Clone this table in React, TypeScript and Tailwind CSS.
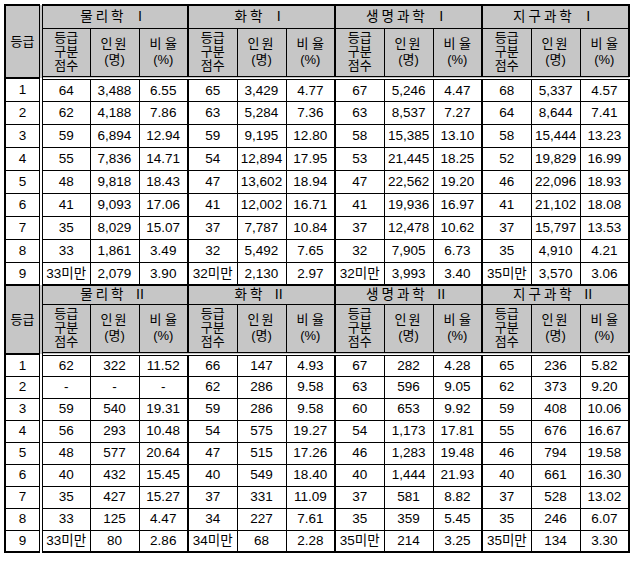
import React from "react";

type Row = [string, string, string];
type Section = { names: string[]; data: Row[][] };

const s1: Section = {
  names: ["물리학 Ⅰ", "화학 Ⅰ", "생명과학 Ⅰ", "지구과학 Ⅰ"],
  data: [
    [
      ["64", "3,488", "6.55"],
      ["62", "4,188", "7.86"],
      ["59", "6,894", "12.94"],
      ["55", "7,836", "14.71"],
      ["48", "9,818", "18.43"],
      ["41", "9,093", "17.06"],
      ["35", "8,029", "15.07"],
      ["33", "1,861", "3.49"],
      ["33미만", "2,079", "3.90"],
    ],
    [
      ["65", "3,429", "4.77"],
      ["63", "5,284", "7.36"],
      ["59", "9,195", "12.80"],
      ["54", "12,894", "17.95"],
      ["47", "13,602", "18.94"],
      ["41", "12,002", "16.71"],
      ["37", "7,787", "10.84"],
      ["32", "5,492", "7.65"],
      ["32미만", "2,130", "2.97"],
    ],
    [
      ["67", "5,246", "4.47"],
      ["63", "8,537", "7.27"],
      ["58", "15,385", "13.10"],
      ["53", "21,445", "18.25"],
      ["47", "22,562", "19.20"],
      ["41", "19,936", "16.97"],
      ["37", "12,478", "10.62"],
      ["32", "7,905", "6.73"],
      ["32미만", "3,993", "3.40"],
    ],
    [
      ["68", "5,337", "4.57"],
      ["64", "8,644", "7.41"],
      ["58", "15,444", "13.23"],
      ["52", "19,829", "16.99"],
      ["46", "22,096", "18.93"],
      ["41", "21,102", "18.08"],
      ["37", "15,797", "13.53"],
      ["35", "4,910", "4.21"],
      ["35미만", "3,570", "3.06"],
    ],
  ],
};

const s2: Section = {
  names: ["물리학 Ⅱ", "화학 Ⅱ", "생명과학 Ⅱ", "지구과학 Ⅱ"],
  data: [
    [
      ["62", "322", "11.52"],
      ["-", "-", "-"],
      ["59", "540", "19.31"],
      ["56", "293", "10.48"],
      ["48", "577", "20.64"],
      ["40", "432", "15.45"],
      ["35", "427", "15.27"],
      ["33", "125", "4.47"],
      ["33미만", "80", "2.86"],
    ],
    [
      ["66", "147", "4.93"],
      ["62", "286", "9.58"],
      ["59", "286", "9.58"],
      ["54", "575", "19.27"],
      ["47", "515", "17.26"],
      ["40", "549", "18.40"],
      ["37", "331", "11.09"],
      ["34", "227", "7.61"],
      ["34미만", "68", "2.28"],
    ],
    [
      ["67", "282", "4.28"],
      ["63", "596", "9.05"],
      ["60", "653", "9.92"],
      ["54", "1,173", "17.81"],
      ["46", "1,283", "19.48"],
      ["40", "1,444", "21.93"],
      ["37", "581", "8.82"],
      ["35", "359", "5.45"],
      ["35미만", "214", "3.25"],
    ],
    [
      ["65", "236", "5.82"],
      ["62", "373", "9.20"],
      ["59", "408", "10.06"],
      ["55", "676", "16.67"],
      ["46", "794", "19.58"],
      ["40", "661", "16.30"],
      ["37", "528", "13.02"],
      ["35", "246", "6.07"],
      ["35미만", "134", "3.30"],
    ],
  ],
};

const cell = "border border-black text-center p-0 align-middle";
const head = "bg-[#c6c6c6]";

function SectionRows({ sec, first }: { sec: Section; first: boolean }) {
  const topB = first ? "" : "border-t-2";
  const groupH = first ? "h-[23px]" : "h-[19px]";
  const rowH = first ? "h-[23px]" : "h-[22px]";
  return (
    <>
      <tr className={groupH}>
        <td
          rowSpan={2}
          className={`${cell} ${head} ${topB} border-r-4 border-double border-b-2 text-[13px]`}
        >
          등급
        </td>
        {sec.names.map((n, i) => (
          <td
            key={n}
            colSpan={3}
            className={`${cell} ${head} ${topB} ${i > 0 ? "border-l-2" : ""} tracking-[3px]`}
          >
            {n}
          </td>
        ))}
      </tr>
      <tr className="h-[50px]">
        {sec.names.map((n, i) => (
          <React.Fragment key={n}>
            <td
              className={`${cell} ${head} border-b-4 border-double ${i > 0 ? "border-l-2" : ""} text-[13px] leading-[14px]`}
            >
              등급
              <br />
              구분
              <br />
              점수
            </td>
            <td className={`${cell} ${head} border-b-4 border-double text-[13px] leading-[16px]`}>
              <span className="tracking-[2px]">인원</span>
              <br />
              (명)
            </td>
            <td className={`${cell} ${head} border-b-4 border-double text-[13px] leading-[16px]`}>
              비 율
              <br />
              (%)
            </td>
          </React.Fragment>
        ))}
      </tr>
      {Array.from({ length: 9 }).map((_, r) => (
        <tr key={r} className={rowH}>
          <td className={`${cell} border-r-4 border-double`}>{r + 1}</td>
          {sec.data.map((g, i) => (
            <React.Fragment key={i}>
              <td className={`${cell} ${i > 0 ? "border-l-2" : ""} whitespace-nowrap`}>
                {g[r][0]}
              </td>
              <td className={cell}>{g[r][1]}</td>
              <td className={cell}>{g[r][2]}</td>
            </React.Fragment>
          ))}
        </tr>
      ))}
    </>
  );
}

export default function App() {
  return (
    <div className="w-[635px] h-[562px] bg-white pt-[4px] pl-[4px] text-black">
      <table
        className="border-collapse table-fixed border-2 border-black w-[626px] text-[13.5px] leading-none"
        style={{ fontFamily: '"Liberation Sans", "Noto Sans CJK KR", sans-serif' }}
      >
        <colgroup>
          <col className="w-[36px]" />
          {Array.from({ length: 12 }).map((_, i) => (
            <col key={i} className="w-[49px]" />
          ))}
        </colgroup>
        <tbody>
          <SectionRows sec={s1} first />
          <SectionRows sec={s2} first={false} />
        </tbody>
      </table>
    </div>
  );
}
